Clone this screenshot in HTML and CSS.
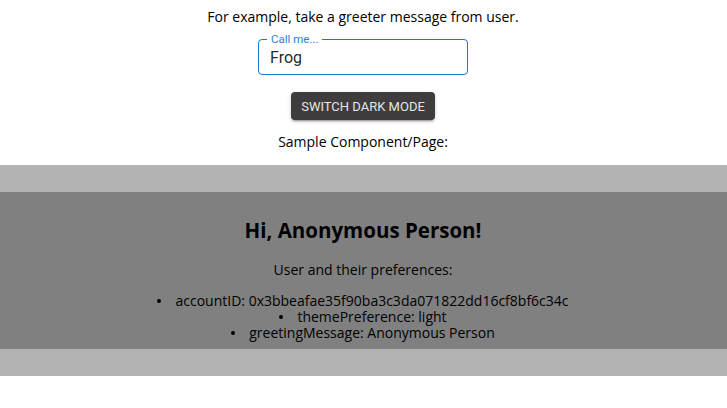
FILE: index.html
```html
<!DOCTYPE html>
<html lang="en">
<head>
<meta charset="utf-8">
<title>Greeter</title>
<link rel="stylesheet" href="styles.css">
</head>
<body>
<main class="app">
  <p class="intro">For example, take a greeter message from user.</p>
  <div class="field">
    <span class="field-label">Call me...</span>
    <input class="field-input" type="text" value="Frog">
  </div>
  <button class="mode-btn" type="button">Switch dark mode</button>
  <p class="sample-title">Sample Component/Page:</p>
  <section class="band">
    <div class="card">
      <h2 class="greeting">Hi, Anonymous Person!</h2>
      <p class="prefs-title">User and their preferences:</p>
      <ul class="prefs">
        <li>accountID: 0x3bbeafae35f90ba3c3da071822dd16cf8bf6c34c</li>
        <li>themePreference: light</li>
        <li>greetingMessage: Anonymous Person</li>
      </ul>
    </div>
  </section>
</main>
</body>
</html>
```
FILE: styles.css
```css
* { box-sizing: border-box; }

html, body {
  margin: 0;
  background: #ffffff;
}

.app {
  display: flex;
  flex-direction: column;
  align-items: center;
  padding-right: 1px;
  font-family: "Open Sans", "Noto Sans", sans-serif;
  font-size: 14px;
  line-height: 16px;
  color: #000;
  text-align: center;
}

.intro {
  margin: 9px 0 0;
}

.field {
  position: relative;
  margin-top: 14px;
  width: 210px;
  height: 36px;
  border: 1px solid #1976d2;
  border-radius: 4px;
  display: flex;
  align-items: center;
}

.field-label {
  position: absolute;
  left: 8px;
  top: -8px;
  padding: 0 4px;
  background: #fff;
  font-family: Roboto, "Liberation Sans", sans-serif;
  font-size: 11.5px;
  line-height: 14px;
  color: #2f80d4;
}

.field-input {
  width: 100%;
  border: 0;
  outline: none;
  background: transparent;
  padding: 0 11px;
  font-family: Roboto, "Liberation Sans", sans-serif;
  font-size: 16px;
  color: rgba(0, 0, 0, 0.87);
}

.mode-btn {
  margin-top: 17px;
  height: 28px;
  padding: 0 10px;
  border: 0;
  border-radius: 4px;
  background: #3e3c3c;
  color: #e4e4e4;
  font-family: Roboto, "Liberation Sans", sans-serif;
  font-size: 13px;
  font-weight: 400;
  letter-spacing: 0;
  text-transform: uppercase;
  box-shadow: 0 3px 1px -2px rgba(0,0,0,.2), 0 2px 2px 0 rgba(0,0,0,.14), 0 1px 5px 0 rgba(0,0,0,.12);
}

.sample-title {
  margin: 14px 0 0;
}

.band {
  align-self: stretch;
  margin-top: 15px;
  margin-right: -1px;
  padding: 27px 0;
  background: #b3b3b3;
}

.card {
  background: #808080;
  padding: 26px 1px 8px 0;
}

.greeting {
  margin: 0;
  font-size: 20.5px;
  line-height: 24px;
  font-weight: 700;
}

.prefs-title {
  margin: 20px 0 0;
}

.prefs {
  list-style: none;
  margin: 15px 0 0;
  padding: 0;
}

.prefs li::before {
  content: "";
  display: inline-block;
  width: 4px;
  height: 4px;
  margin-right: 14px;
  border-radius: 50%;
  background: #000;
  vertical-align: 3px;
}
```
